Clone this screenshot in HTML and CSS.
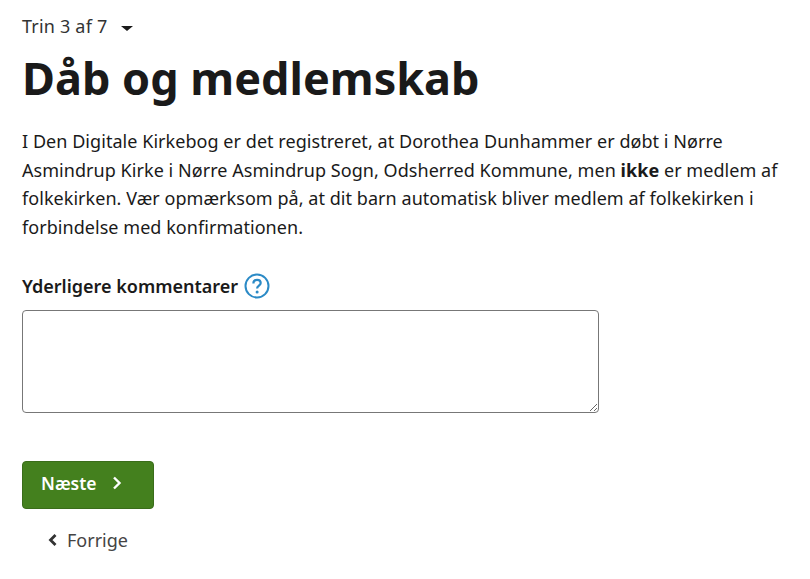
FILE: index.html
```html
<!DOCTYPE html>
<html lang="da">
<head>
    <meta charset="UTF-8">
    <meta name="viewport" content="width=device-width, initial-scale=1.0">
    <title>Dåb og medlemskab</title>
    <link rel="stylesheet" href="styles.css">
</head>
<body>
    <main class="container">
        <div class="step">
            <span>Trin 3 af 7</span>
            <span class="step-caret"></span>
        </div>
        <h1>Dåb og medlemskab</h1>
        <p class="intro">I Den Digitale Kirkebog er det registreret, at Dorothea Dunhammer er døbt i Nørre<br>Asmindrup Kirke i Nørre Asmindrup Sogn, Odsherred Kommune, men <strong>ikke</strong> er medlem af<br>folkekirken. Vær opmærksom på, at dit barn automatisk bliver medlem af folkekirken i<br>forbindelse med konfirmationen.</p>
        <div class="field-label">
            <label for="comments">Yderligere kommentarer</label>
            <svg class="help-icon" width="26" height="26" viewBox="0 0 26 26" fill="none">
                <circle cx="13" cy="13" r="11.5" stroke="#2b8ac6" stroke-width="2"/>
                <path d="M9.4 10.4c0-2.2 1.6-3.6 3.7-3.6 2.1 0 3.6 1.3 3.6 3.2 0 2.6-3.6 2.8-3.6 5.6" stroke="#2b8ac6" stroke-width="2.2"/>
                <circle cx="13.1" cy="19" r="1.5" fill="#2b8ac6"/>
            </svg>
        </div>
        <textarea id="comments" class="comments"></textarea>
        <button class="next-button" type="button">
            <span>Næste</span>
            <svg width="10" height="14" viewBox="0 0 10 14" fill="none"><path d="M2 1.5 7.5 7 2 12.5" stroke="#fff" stroke-width="2.4"/></svg>
        </button>
        <a class="prev-link" href="#">
            <svg width="10" height="14" viewBox="0 0 10 14" fill="none"><path d="M8.5 2 3.5 7l5 5" stroke="#333" stroke-width="2.8"/></svg>
            <span>Forrige</span>
        </a>
    </main>
</body>
</html>
```
FILE: styles.css
```css
body {
    font-family: 'Noto Sans', sans-serif;
    margin: 0;
    background-color: #fff;
    color: #1a1a1a;
}
.container {
    padding: 13px 0 0 22px;
}
.step {
    display: flex;
    align-items: center;
    gap: 14px;
    font-size: 18px;
    letter-spacing: 0.2px;
    line-height: 27px;
    color: #333;
}
.step-caret {
    border-top: 5px solid #1a1a1a;
    border-left: 6px solid transparent;
    border-right: 6px solid transparent;
    margin-top: 3px;
}
h1 {
    font-size: 45px;
    line-height: 60px;
    font-weight: 700;
    margin: 8px 0 19px;
}
.intro {
    font-size: 18px;
    letter-spacing: 0.05px;
    line-height: 28.7px;
    margin: 0 0 30px;
    white-space: nowrap;
}
.intro strong {
    font-weight: 700;
}
.field-label {
    display: flex;
    align-items: center;
    gap: 6px;
    font-size: 18px;
    font-weight: 600;
    line-height: 28px;
    margin-bottom: 10px;
}
.help-icon {
    display: block;
}
.comments {
    display: block;
    box-sizing: border-box;
    width: 577px;
    height: 103px;
    border: 1px solid #777;
    border-radius: 4px;
    margin: 0 0 48px;
}
.next-button {
    display: flex;
    align-items: center;
    gap: 15px;
    box-sizing: border-box;
    width: 132px;
    height: 48px;
    padding: 0 18px 4px;
    background-color: #44801e;
    border: 1px solid #3a6d1a;
    border-radius: 4px;
    color: #fff;
    font-family: inherit;
    font-size: 17.5px;
    font-weight: 600;
}
.prev-link {
    display: flex;
    align-items: center;
    gap: 10px;
    margin: 18px 0 0 25px;
    font-size: 18px;
    line-height: 27px;
    color: #444;
    text-decoration: none;
}
```
